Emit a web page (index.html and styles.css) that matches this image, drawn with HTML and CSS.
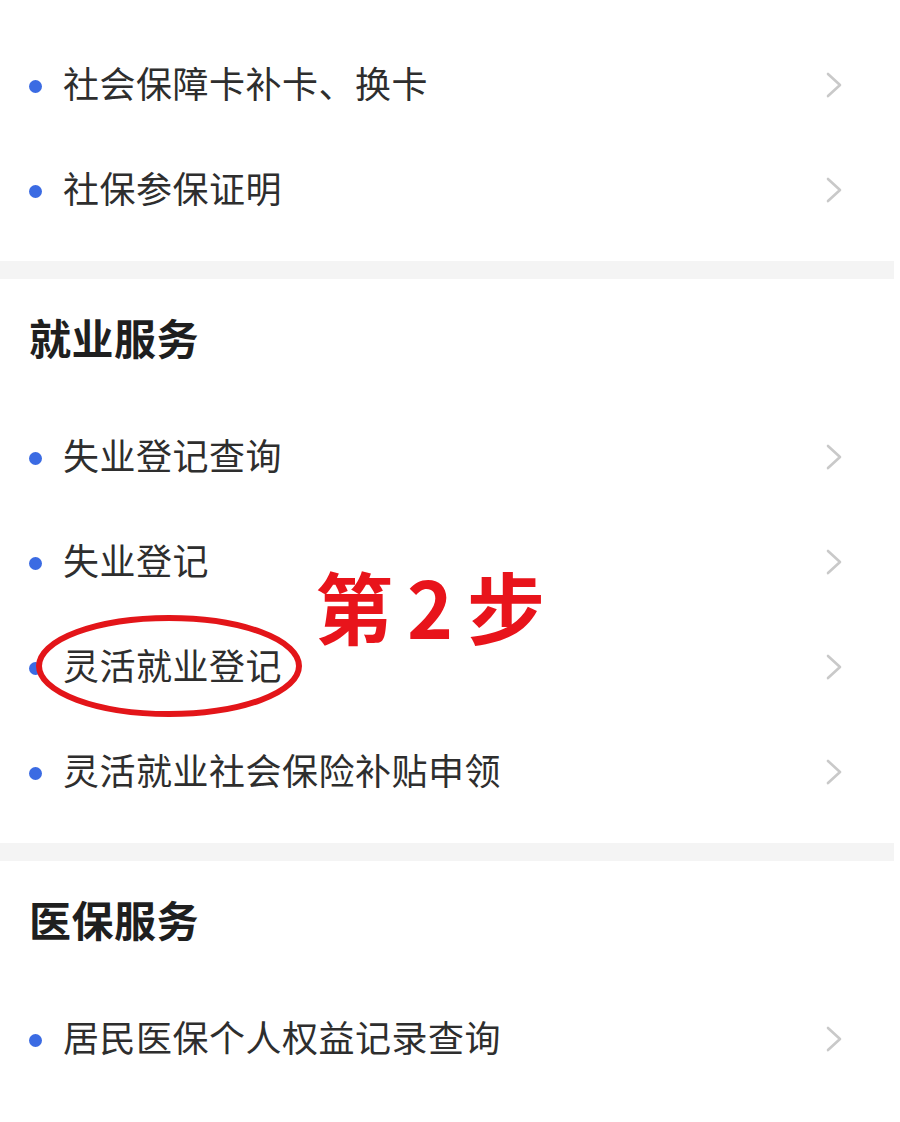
FILE: index.html
```html
<!DOCTYPE html>
<html lang="zh-CN">
<head>
<meta charset="utf-8">
<link rel="stylesheet" href="styles.css">
</head>
<body>
<div class="page">
  <section class="group first">
    <ul class="list">
      <li class="row"><span class="dot"></span><span class="label">社会保障卡补卡、换卡</span><svg class="chev" viewBox="0 0 16 26"><polyline points="2,2 14,13 2,24"/></svg></li>
      <li class="row"><span class="dot"></span><span class="label">社保参保证明</span><svg class="chev" viewBox="0 0 16 26"><polyline points="2,2 14,13 2,24"/></svg></li>
    </ul>
  </section>
  <div class="band"></div>
  <section class="group">
    <h2 class="title">就业服务</h2>
    <ul class="list">
      <li class="row"><span class="dot"></span><span class="label">失业登记查询</span><svg class="chev" viewBox="0 0 16 26"><polyline points="2,2 14,13 2,24"/></svg></li>
      <li class="row"><span class="dot"></span><span class="label">失业登记</span><svg class="chev" viewBox="0 0 16 26"><polyline points="2,2 14,13 2,24"/></svg></li>
      <li class="row marked"><span class="dot"></span><span class="label">灵活就业登记</span><svg class="chev" viewBox="0 0 16 26"><polyline points="2,2 14,13 2,24"/></svg>
        <svg class="ring" viewBox="0 0 276 110"><ellipse cx="136" cy="52" rx="130" ry="48"/></svg>
        <span class="step">第<span class="num">2</span>步</span>
      </li>
      <li class="row"><span class="dot"></span><span class="label">灵活就业社会保险补贴申领</span><svg class="chev" viewBox="0 0 16 26"><polyline points="2,2 14,13 2,24"/></svg></li>
    </ul>
  </section>
  <div class="band"></div>
  <section class="group">
    <h2 class="title">医保服务</h2>
    <ul class="list">
      <li class="row"><span class="dot"></span><span class="label">居民医保个人权益记录查询</span><svg class="chev" viewBox="0 0 16 26"><polyline points="2,2 14,13 2,24"/></svg></li>
    </ul>
  </section>
</div>
</body>
</html>
```
FILE: styles.css
```css
* { box-sizing: border-box; }
html, body { margin: 0; padding: 0; background: #fff; }
body {
  font-family: "Noto Sans CJK SC", "Noto Sans", sans-serif;
  color: #2b2b2b;
}
.page { width: 900px; overflow: hidden; }
.group { padding-bottom: 19px; }
.group.first { padding-top: 32px; }
.band { height: 18px; background: #f4f4f4; margin-right: 6px; }
.title {
  margin: 0;
  height: 125px;
  line-height: 115px;
  padding-bottom: 10px;
  padding-left: 29px;
  font-size: 42px;
  font-weight: 700;
  color: #1f1f1f;
  letter-spacing: 0.5px;
}
.list { list-style: none; margin: 0; padding: 0; }
.row {
  position: relative;
  height: 105px;
  display: flex;
  align-items: center;
  padding-left: 29px;
}
.dot {
  width: 13px; height: 13px;
  border-radius: 50%;
  background: #3b6be3;
  flex: none;
  margin-top: 4px;
}
.label {
  margin-left: 21px;
  margin-bottom: 6px;
  font-size: 36px;
  letter-spacing: 0.5px;
  color: #2e2e2e;
  flex: 1;
}
.chev {
  width: 16px; height: 26px;
  margin-right: 58px;
  flex: none;
}
.chev polyline {
  fill: none;
  stroke: #c9c9c9;
  stroke-width: 2.6;
  stroke-linecap: round;
  stroke-linejoin: round;
}
.ring {
  position: absolute;
  left: 33px; top: 0;
  width: 276px; height: 110px;
}
.ring ellipse {
  fill: none;
  stroke: #e31519;
  stroke-width: 6;
}
.step {
  position: absolute;
  left: 315px; top: -48px;
  font-size: 78px;
  line-height: 78px;
  font-weight: 700;
  color: #e8141b;
  white-space: nowrap;
}
.step .num { margin: 0 14px 0 14px; }
```
